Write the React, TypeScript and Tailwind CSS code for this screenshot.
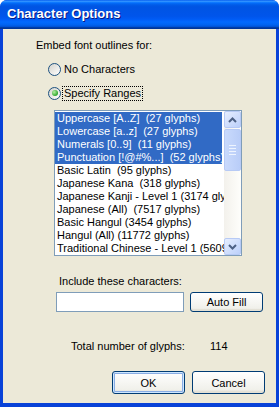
import React from "react";

const FONT = "font-['Tahoma','Liberation_Sans',sans-serif]";

const items = [
  { label: "Uppercase [A..Z]  (27 glyphs)", selected: true },
  { label: "Lowercase [a..z]  (27 glyphs)", selected: true },
  { label: "Numerals [0..9]  (11 glyphs)", selected: true },
  { label: "Punctuation [!@#%...]  (52 glyphs)", selected: true },
  { label: "Basic Latin  (95 glyphs)", selected: false },
  { label: "Japanese Kana  (318 glyphs)", selected: false },
  { label: "Japanese Kanji - Level 1 (3174 glyphs)", selected: false },
  { label: "Japanese (All)  (7517 glyphs)", selected: false },
  { label: "Basic Hangul (3454 glyphs)", selected: false },
  { label: "Hangul (All) (11772 glyphs)", selected: false },
  { label: "Traditional Chinese - Level 1 (5609 glyphs)", selected: false },
];

const Radio = ({ checked }: { checked?: boolean }) => (
  <span className="relative flex h-[13px] w-[13px] shrink-0 items-center justify-center rounded-full border border-[#1C5180] bg-[linear-gradient(135deg,#D4D3CC,#FFFFFF)]">
    {checked && (
      <span className="h-[6px] w-[6px] rounded-full bg-[radial-gradient(circle_at_35%_35%,#B4F0A0,#2EA62E_70%)]" />
    )}
  </span>
);

const ScrollButton = ({ up }: { up?: boolean }) => (
  <div className="flex h-[17px] w-[17px] items-center justify-center rounded-[2px] border border-[#B7CAF5] bg-[linear-gradient(135deg,#E6EEFF,#BCD0FA)]">
    <svg width="9" height="6" viewBox="0 0 9 6">
      <path
        d={up ? "M1 5 L4.5 1.5 L8 5" : "M1 1 L4.5 4.5 L8 1"}
        stroke="#4D6185"
        strokeWidth="2"
        fill="none"
      />
    </svg>
  </div>
);

const XPButton = ({ children, primary }: { children: React.ReactNode; primary?: boolean }) => (
  <button
    className={
      "flex h-full w-[73px] items-center justify-center rounded-[3px] border border-[#003C74] bg-[linear-gradient(to_bottom,#FFFFFF,#F0F0EA_85%,#D6D0C5)] text-[11px] text-black " +
      (primary
        ? "shadow-[inset_0_0_0_1px_#CEE7FF,inset_0_0_0_2px_#89ADE4]"
        : "shadow-[inset_0_-2px_0_#E3E1D6]")
    }
  >
    {children}
  </button>
);

export default function App() {
  return (
    <div className={"flex h-[407px] w-[279px] flex-col overflow-hidden rounded-t-[7px] bg-[#0842D8] " + FONT}>
      {/* title bar */}
      <div className="flex h-[29px] shrink-0 items-center bg-[linear-gradient(to_bottom,#0058EE_0%,#3593FF_4%,#288EFF_6%,#127DFF_8%,#036FFC_10%,#0262EE_14%,#0057E5_20%,#0054E3_24%,#0055EB_56%,#005BF5_66%,#026AFE_76%,#0062EF_86%,#0052D6_92%,#0040AB_94%,#003092_100%)] pl-[7px]">
        <span className="pb-[1px] text-[13px] font-bold text-white [text-shadow:1px_1px_#0A1883]">
          Character Options
        </span>
      </div>

      {/* body */}
      <div className="mx-[3px] mb-[4px] flex flex-1 flex-col bg-[#ECE9D8] text-[11px] leading-[14px] text-black">
        <div className="ml-[33px] mt-[9px] h-[14px]">Embed font outlines for:</div>

        <div className="ml-[45px] mt-[9px] flex h-[16px] items-center gap-[2px]">
          <Radio />
          <span className="px-[1px]">No Characters</span>
        </div>
        <div className="ml-[45px] mt-[8px] flex h-[16px] items-center gap-[1px]">
          <Radio checked />
          <span className="border border-dotted border-black px-[1px] leading-[13px]">Specify Ranges</span>
        </div>

        {/* list box */}
        <div className="ml-[51px] mt-[9px] flex h-[146px] w-[188px] border border-[#7F9DB9] bg-white">
          <div className="flex w-[169px] flex-col overflow-hidden pt-[1px]">
            {items.map((it) => (
              <div
                key={it.label}
                className={
                  "h-[13px] whitespace-pre pl-[2px] leading-[13px] " +
                  (it.selected ? "mr-[2px] bg-[#316AC5] text-white" : "text-black")
                }
              >
                {it.label}
              </div>
            ))}
          </div>
          <div className="flex w-[17px] flex-col bg-[linear-gradient(to_right,#F3F1EC,#FEFEFB)]">
            <ScrollButton up />
            <div className="mt-[1px] flex h-[42px] flex-col items-center justify-center gap-[2px] rounded-[2px] border border-[#B7CAF5] bg-[linear-gradient(to_right,#C9DAFC,#B9CDF8)]">
              <span className="h-[1px] w-[7px] bg-[#EEF4FE]" />
              <span className="h-[1px] w-[7px] bg-[#EEF4FE]" />
              <span className="h-[1px] w-[7px] bg-[#EEF4FE]" />
              <span className="h-[1px] w-[7px] bg-[#EEF4FE]" />
            </div>
            <div className="flex-1" />
            <ScrollButton />
          </div>
        </div>

        <div className="ml-[56px] mt-[18px] h-[14px]">Include these characters:</div>

        <div className="ml-[53px] mt-[4px] flex h-[20px] gap-[6px]">
          <div className="h-full w-[128px] border border-[#7F9DB9] bg-white" />
          <XPButton>Auto Fill</XPButton>
        </div>

        <div className="ml-[68px] mt-[27px] flex h-[14px]">
          <span className="w-[139px]">Total number of glyphs:</span>
          <span>114</span>
        </div>

        <div className="ml-[109px] mt-[18px] flex h-[23px] gap-[7px]">
          <XPButton primary>OK</XPButton>
          <XPButton>Cancel</XPButton>
        </div>
      </div>
    </div>
  );
}
